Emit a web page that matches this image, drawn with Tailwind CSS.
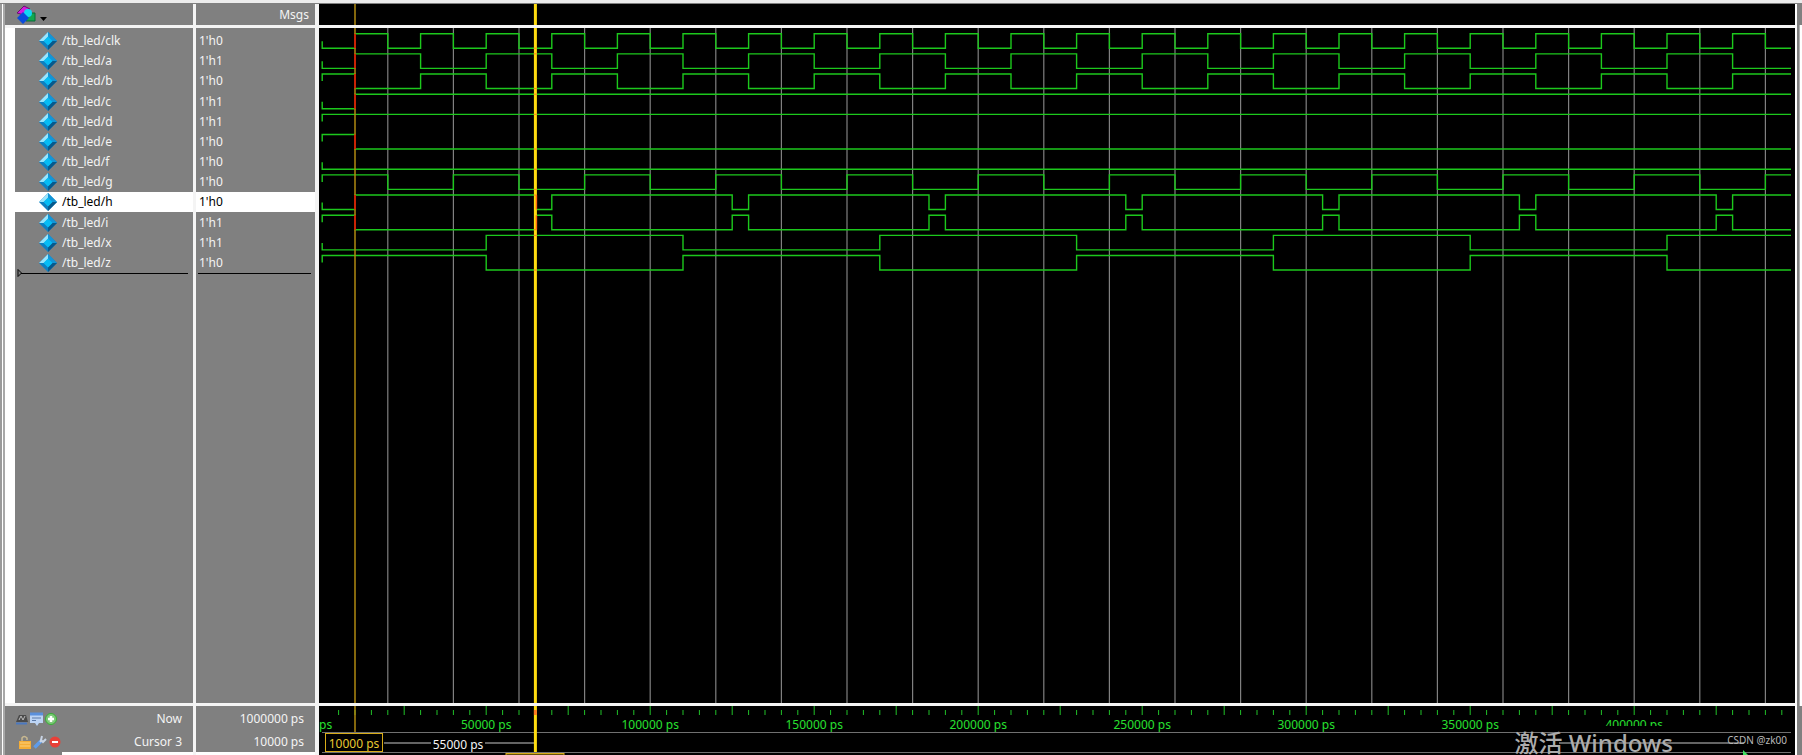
<!DOCTYPE html>
<html lang="en">
<head>
<meta charset="utf-8">
<title>Wave</title>
<script src="https://cdn.jsdelivr.net/npm/@tailwindcss/browser@4"></script>
</head>
<body class="h-screen overflow-hidden bg-[#808080] font-['Noto_Sans','Noto_Sans_CJK_SC',sans-serif] text-xs text-[#f4f4f4]">
<svg class="hidden">
  <symbol id="gem" viewBox="0 0 18 18">
    <path d="M9 0 18 9 9 18 0 9Z" fill="#0e7fc0"/>
    <path d="M9 0 9 5 5 9 0 9Z" fill="#9be4fb"/>
    <path d="M9 0 18 9 13 9 9 5Z" fill="#1296d8"/>
    <path d="M18 9 9 18 9 13 13 9Z" fill="#07598c"/>
    <path d="M9 4.500 13.500 9 9 13.500 4.500 9Z" fill="#06bdf5"/>
  </symbol>
</svg>
<div class="flex h-full flex-col">
  <div class="h-1 shrink-0 border-b border-[#808080] bg-[#ececec]"></div>
  <div class="flex min-h-0 flex-1">
    <div class="w-[5px] shrink-0 border-x-2 border-l-[#9a9a9a] border-r-[#a8a8a8] bg-white"></div>
    <main class="grid min-w-0 flex-1 grid-cols-[188px_3px_119px_4px_minmax(0,1fr)] grid-rows-[21px_3px_minmax(0,1fr)_3px_49px] bg-[#f4f4f4]">
      <header class="col-start-1 row-start-1 bg-[#808080]">
        <button class="flex h-full items-center gap-1 pl-[11px]" aria-label="Signal options">
          <svg class="h-5 w-5" viewBox="0 0 20 20"><path d="M1 8 8 1 14 4 8 10Z" fill="#d41ce0" stroke="#6a1070"/><path d="M12 8H19V16H10Z" fill="#12a850" stroke="#0a6a38"/><circle cx="12" cy="8" r="4" fill="#12d8f4"/><path d="M7 7 13 13 7 19 1 13Z" fill="#0a4bdc"/></svg>
          <svg class="mt-2 h-1 w-2" viewBox="0 0 8 4"><path d="M0 0H7L3.500 4Z"/></svg>
        </button>
      </header>
      <div class="col-start-3 row-start-1 flex items-center justify-end bg-[#808080] pr-1.5">Msgs</div>
      <div class="col-start-5 row-start-1 bg-black"><svg id="top" class="h-full w-full" aria-hidden="true"></svg></div>
      <section class="col-start-1 row-start-3 border-l-10 border-white bg-[#808080] pt-[3px]">
        <ul id="names" class="grid h-[242px] grid-rows-12"></ul>
        <svg class="-mt-1 h-2 w-[173px]" aria-hidden="true"><path d="M3 0.500 6.500 4 3 7.500Z" fill="none" stroke="black"/><path d="M6 4.500H173" stroke="black"/></svg>
      </section>
      <section class="col-start-3 row-start-3 bg-[#808080] pt-[3px]">
        <ul id="values" class="grid h-[242px] grid-rows-12"></ul>
        <div class="ml-0.5 mr-1 h-px bg-black"></div>
      </section>
      <section class="col-start-5 row-start-3 overflow-hidden bg-black pr-1"><svg id="waves" class="h-full w-full" role="img" aria-label="Waveforms"></svg></section>
      <footer class="col-start-1 row-start-5 flex flex-col bg-[#808080] pr-[11px]">
        <div class="flex h-[26px] shrink-0 items-center pl-2.5">
          <button aria-label="Time"><svg class="size-3.5" viewBox="0 0 14 14"><path d="M1 10 4 3H11L13 10Z" fill="#4a4a4a"/><path d="M4 8 6 4 8 8 10 4" stroke="#bbb" fill="none"/><path d="M1 11.500H12" stroke="#4a78c0" stroke-width="2"/></svg></button>
          <button aria-label="Edit grid"><svg class="size-3.5" viewBox="0 0 14 14"><path d="M1 1H14V11H10L8 14 6 11H1Z" fill="#bcd4f4"/><path d="M1 2H14" stroke="#5a90dc" stroke-width="3"/><path d="M3 6H12M3 8.500H7" stroke="#5c7ba8"/></svg></button>
          <button class="ml-0.5" aria-label="Insert cursor"><svg class="size-3" viewBox="0 0 12 12"><circle cx="6" cy="6" r="5.500" fill="#7cc878" stroke="#38ad35"/><path d="M6 3V9M3 6H9" stroke="white" stroke-width="2.500"/></svg></button>
          <span class="ml-auto">Now</span>
        </div>
        <div class="flex h-5 shrink-0 items-center pl-3">
          <button aria-label="Lock cursor"><svg class="size-3.5" viewBox="0 0 14 14"><path d="M5 6V3Q7 0 10 3V5" fill="none" stroke="#c8b890" stroke-width="1.500"/><rect x="2" y="6" width="12" height="8" fill="#f5ad35"/><path d="M3 8H13M3 11H13" stroke="#fad080"/></svg></button>
          <button class="ml-0.5" aria-label="Edit cursor"><svg class="size-3.5" viewBox="0 0 14 14"><path d="M1.500 12.500 8 6" stroke="#5d9bea" stroke-width="3.500"/><path d="M7 7 9 5M9 1 8 5 10 7 13 4" stroke="#c8d4e4" stroke-width="2" fill="none"/></svg></button>
          <button class="ml-0.5" aria-label="Delete cursor"><svg class="size-3" viewBox="0 0 12 12"><circle cx="6" cy="6" r="5.500" fill="#e84038"/><path d="M3 6H9" stroke="white" stroke-width="2"/></svg></button>
          <span class="ml-auto">Cursor 3</span>
        </div>
        <div class="-mr-[11px] ml-[57px] h-[3px] bg-white"></div>
      </footer>
      <div class="col-start-3 row-start-5 flex flex-col border-b-3 border-white bg-[#808080] pr-[11px] text-right"><span class="h-[26px] leading-[26px]">1000000 ps</span><span class="h-5 leading-5">10000 ps</span></div>
      <section class="relative col-start-5 row-start-5 overflow-hidden bg-black pr-1">
        <svg id="ruler" class="h-full w-full" font-size="12" role="img" aria-label="Timeline"></svg>
        <p class="absolute right-[122px] top-[25px] whitespace-nowrap text-2xl/6 font-medium text-[#acacac]">激活 Windows</p>
        <p class="absolute right-2 top-[26px] text-[10px] leading-4 text-[#b8b8b8]">CSDN @zk00</p>
      </section>
    </main>
    <div class="grid w-[7px] shrink-0 grid-rows-[21px_minmax(0,1fr)_49px] border-l-2 border-white">
      <div class="ml-0.5 bg-[#808080]"></div>
      <div class="ml-0.5 border-l border-[#b0b0b0] bg-white"></div>
      <div class="ml-0.5 bg-[#808080]"></div>
    </div>
  </div>
</div>
<script>
const END = 480;
const X = t => 3.2 + t * 3.28;
const inv = s => [1 - s[0], s[1]];
const every = (start, step) => { const r = []; for (let t = start; t < END; t += step) r.push(t); return r; };
const a = [0, every(10, 20)], h = [0, [10, ...every(65, 60).flatMap(t => [t, t + 5])]], x = [0, every(50, 60)];
const signals = [
  ['clk', '0', [0, every(10, 10)]], ['a', '1', a], ['b', '0', inv(a)], ['c', '1', [0, [10]]],
  ['d', '1', [1, []]], ['e', '0', [1, [10]]], ['f', '0', [0, []]], ['g', '0', [1, every(20, 20)]],
  ['h', '0', h], ['i', '1', inv(h)], ['x', '1', x], ['z', '0', inv(x)]
];
let waves = '';
for (let t = 20; t < END; t += 20) waves += `<path d="M${X(t)} 0V2000" stroke="#808080" stroke-width="1.200"/>`;
let edges = '', marks = '';
signals.forEach(([name, value, [start, changes]], i) => {
  const selected = name === 'h' ? 'bg-white text-black' : '';
  names.innerHTML += `<li class="flex items-center gap-[5px] pl-6 ${selected}"><svg class="size-[18px]"><use href="#gem"/></svg>/tb_led/${name}</li>`;
  values.innerHTML += `<li class="flex items-center pl-[3px] ${selected}">1'h${value}</li>`;
  const y = v => 5.7 + i * 20.17 + (v ? 0 : 14.500);
  let v = start, d = `M${X(0)} ${y(v) + (v ? 7 : -7)}V${y(v)}`, at65 = v;
  for (const t of changes) {
    d += `H${X(t)}V${y(1 - v)}`; v = 1 - v;
    if (t < 65) at65 = v;
    if (t === 10) edges += `<path d="M${X(10)} ${y(0)}V${y(1)}" stroke="#e00000" stroke-width="1.500"/>`;
    if (t === 65) marks += `<path d="M${X(65) + 1} ${y(0)}V${y(1)}" stroke="#ff6a10" stroke-width="1.500"/>`;
  }
  waves += `<path d="${d}H${X(END)}" fill="none" stroke="#1cc81c" stroke-width="1.400"/>`;
  marks += `<path d="M${X(65) - 1.500} ${y(at65)}h3" stroke="#ff7a20"/>`;
});
const cursors = `<path d="M${X(10)} 0V2000" stroke="#b08a10" stroke-width="1.500"/><path d="M${X(65)} 0V2000" stroke="#ffdc10" stroke-width="3"/>`;
document.getElementById('waves').innerHTML = waves + cursors + edges + marks;
document.getElementById('top').innerHTML = `<g>${cursors}</g>`;
let r = '';
for (let t = 5; t < END; t += 5) r += `<path d="M${X(t)} ${t % 25 ? 4 : 0}V9" stroke="#20c028"/>`;
for (let t = 0; t <= 400; t += 50) r += t ? `<text x="${X(t)}" y="23" fill="#28e030" text-anchor="middle">${t * 1000} ps</text>` : `<text x="0" y="23" fill="#28e030">ps</text>`;
r += `<rect x="${X(385)}" y="20" width="150" height="7"/>
<rect x="0" y="27" width="3000" height="22" fill="#000"/><path d="M3 26.500H3000M3 46.500H3000" stroke="#707070"/>
<path d="M65 37H${X(65)}M1240 37H1425" stroke="#c8c8c8"/><path d="M1424 44 1429 49H1424Z" fill="#40e060"/>
<rect x="112" y="29" width="54" height="16"/><text x="139" y="43" fill="#f4f4f4" text-anchor="middle">55000 ps</text>
<path d="M${X(10)} 0V26" stroke="#b08a10" stroke-width="1.500"/><path d="M${X(65)} 0V46" stroke="#ffdc10" stroke-width="3"/><path d="M${X(65)} 4V9" stroke="#ff7a20" stroke-width="3"/>
<rect x="6.500" y="27.500" width="57" height="18" fill="#000" stroke="#d8ac18"/><text x="35" y="42" fill="#e8c830" text-anchor="middle">10000 ps</text>
<rect x="187" y="47.500" width="58" height="8" fill="#665208" stroke="#d8ac18"/>`;
ruler.innerHTML = r;
</script>
</body>
</html>
